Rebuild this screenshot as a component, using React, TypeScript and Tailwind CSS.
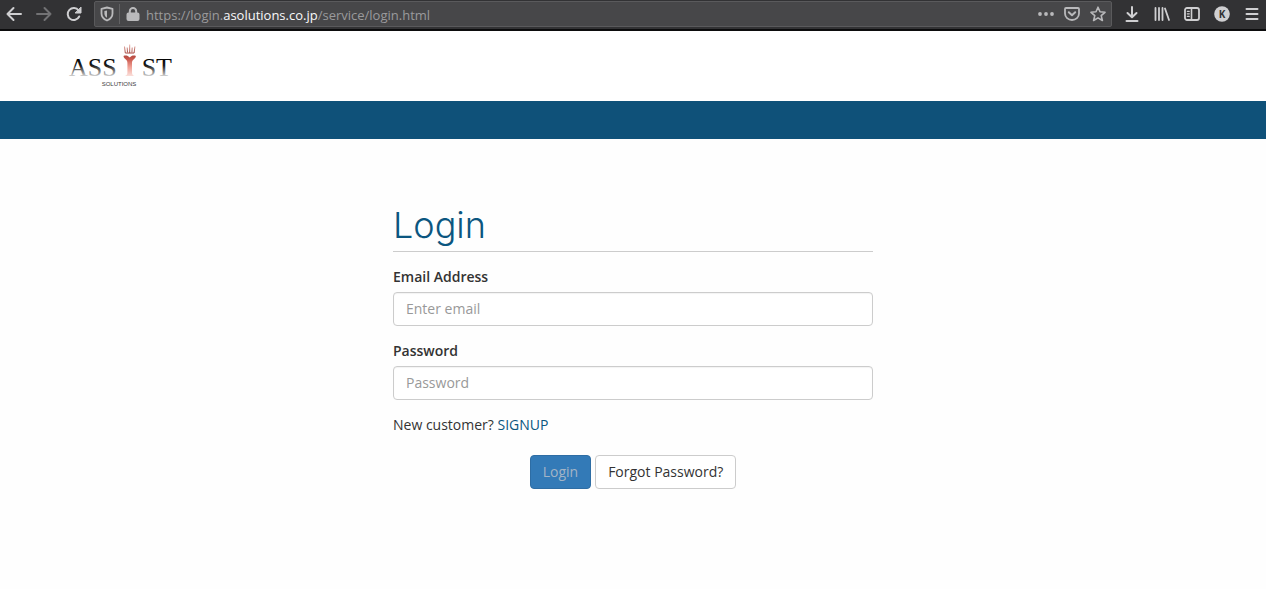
import React, { useState } from "react";

const Icon = ({ children }: { children: React.ReactNode }) => (
  <svg
    viewBox="0 0 16 16"
    className="w-4 h-4 shrink-0"
    fill="none"
    stroke="currentColor"
    strokeWidth="2"
    strokeLinecap="round"
    strokeLinejoin="round"
    aria-hidden="true"
  >
    {children}
  </svg>
);

const ToolBtn = ({
  label,
  disabled,
  children,
}: {
  label: string;
  disabled?: boolean;
  children: React.ReactNode;
}) => (
  <button
    type="button"
    aria-label={label}
    disabled={disabled}
    className="w-7 h-7 flex items-center justify-center text-[#cfcfd1] disabled:text-[#727274]"
  >
    <Icon>{children}</Icon>
  </button>
);

const BarBtn = ({
  label,
  children,
}: {
  label: string;
  children: React.ReactNode;
}) => (
  <button type="button" aria-label={label} className="text-[#b9b9bb]">
    <Icon>{children}</Icon>
  </button>
);

const BrowserBar = () => (
  <div className="flex items-center pb-px bg-[#323234] border-b-2 border-[#0c0c0d]">
    <div className="flex gap-0.5">
      <ToolBtn label="Back">
        <path d="M15 8H1.500M7.500 2L1.500 8l6 6" />
      </ToolBtn>
      <ToolBtn label="Forward" disabled>
        <path d="M1 8h13.500M8.500 2l6 6-6 6" />
      </ToolBtn>
      <ToolBtn label="Reload">
        <path d="M13.200 10.500A6 6 0 1 1 12.600 4.500" />
        <path d="M15 1.500V7H9.500z" fill="currentColor" strokeWidth="1" />
      </ToolBtn>
    </div>

    <div className="flex flex-1 min-w-0 items-center h-[26px] mx-1.5 pl-1 pr-[5px] bg-[#474749] border border-[#5a5a5c] rounded-xs">
      <BarBtn label="Tracking protection">
        <path
          d="M8 1.500l5.500 1.300v4.700c0 3.300-2.400 5.700-5.500 7-3.100-1.300-5.500-3.700-5.500-7V2.800z"
          strokeWidth="1.800"
        />
        <path
          d="M8 4.500v7.200c-1.700-1-2.600-2.400-2.600-4.300V5z"
          fill="currentColor"
          stroke="none"
        />
      </BarBtn>
      <span className="w-px h-5 ml-1 bg-[#626264]" />
      <span className="ml-[5px] text-[#b9b9bb]">
        <Icon>
          <rect x="2.500" y="7.500" width="11" height="6.500" rx="1" fill="currentColor" />
          <path d="M4.800 7V5.200a3.200 3.200 0 0 1 6.400 0V7" />
        </Icon>
      </span>
      <div className="flex-1 min-w-0 ml-[5px] pt-px truncate font-['Open_Sans',sans-serif] text-[13px] leading-5 text-[#9a9a9c]">
        https://login.<span className="text-[#f9f9fa]">asolutions.co.jp</span>
        /service/login.html
      </div>
      <div className="flex gap-2.5">
        <BarBtn label="Page actions">
          <g fill="currentColor" stroke="none">
            <circle cx="2" cy="8" r="1.900" />
            <circle cx="8" cy="8" r="1.900" />
            <circle cx="14" cy="8" r="1.900" />
          </g>
        </BarBtn>
        <BarBtn label="Save to Pocket">
          <path
            d="M2 2h12a1 1 0 0 1 1 1v4.500a7 6.500 0 0 1-14 0V3a1 1 0 0 1 1-1z"
            strokeWidth="1.800"
          />
          <path d="M4.800 6.300L8 9.300l3.200-3" />
        </BarBtn>
        <BarBtn label="Bookmark">
          <path
            d="M8 1.200l2 4.600 5 .5-3.800 3.300 1.200 4.900L8 11.900l-4.400 2.600 1.200-4.900L1 6.300l5-.5z"
            strokeWidth="1.600"
          />
        </BarBtn>
      </div>
    </div>

    <div className="flex gap-0.5">
      <ToolBtn label="Downloads">
        <path d="M8 1v10M3.500 7L8 11.300 12.500 7M2.500 15h11" />
      </ToolBtn>
      <ToolBtn label="Library">
        <path
          d="M1.500 2v12M5 2v12M8.500 2v12M11 2.500l4 11.500"
          strokeWidth="1.800"
        />
      </ToolBtn>
      <ToolBtn label="Sidebar">
        <rect x="1" y="2" width="14" height="12" rx="2" strokeWidth="1.800" />
        <path d="M7.500 2.500v11" strokeWidth="1.600" />
        <path d="M3.300 5.300h2M3.300 7.800h2M3.300 10.300h2" strokeWidth="1.200" />
      </ToolBtn>
      <ToolBtn label="Account">
        <circle cx="8" cy="8" r="7.800" fill="currentColor" stroke="none" />
        <text
          x="8"
          y="11.500"
          textAnchor="middle"
          fill="#323234"
          stroke="none"
          className="font-['Open_Sans',sans-serif] text-[10px] font-bold"
        >
          K
        </text>
      </ToolBtn>
      <ToolBtn label="Menu">
        <path d="M2.500 3h11M2.500 8h11M2.500 13h11" />
      </ToolBtn>
    </div>
  </div>
);

const Logo = () => (
  <svg
    viewBox="0 0 106 44"
    className="w-[106px] h-11"
    role="img"
    aria-label="Assist Solutions"
  >
    <defs>
      <linearGradient id="ink" gradientUnits="userSpaceOnUse" x1="0" y1="15" x2="0" y2="34">
        <stop offset="0" stopColor="#000" />
        <stop offset="0.4" stopColor="#1c1c1c" />
        <stop offset="1" stopColor="#e2e2e2" />
      </linearGradient>
      <linearGradient id="flame" gradientUnits="userSpaceOnUse" x1="0" y1="1" x2="0" y2="34">
        <stop offset="0" stopColor="#eeb9b2" />
        <stop offset="0.28" stopColor="#a4453d" />
        <stop offset="0.45" stopColor="#c9574c" />
        <stop offset="0.7" stopColor="#f0a095" />
        <stop offset="1" stopColor="#fbe6e2" />
      </linearGradient>
    </defs>
    <g fill="url(#ink)" className="font-['Liberation_Serif',serif] text-[26px]">
      <text x="2" y="33">ASS</text>
      <text x="105" y="33" textAnchor="end">ST</text>
    </g>
    <path
      d="M57.500 3.500l.8 6.500h8.800l.8-6.500M62.700 1.500V10M60.200 4.500l.3 5M65.200 4.500l-.3 5"
      fill="none"
      stroke="url(#flame)"
      strokeWidth="1"
    />
    <path
      d="M56.500 13c1.800-.9 4.600-.6 6.200 1.600 1.600-2.200 4.400-2.500 6.200-1.600-.2 1.800-1.200 2.500-2.300 3.400-1.200 1-1.600 2-1.600 3.600v9.500c0 2 .8 2.900 2.500 3.500h-9.600c1.700-.6 2.500-1.500 2.500-3.500V20c0-1.600-.4-2.600-1.600-3.600-1.100-.9-2.100-1.600-2.300-3.400z"
      fill="url(#flame)"
    />
    <text
      x="52"
      y="43"
      textAnchor="middle"
      fill="#3c3c3c"
      className="font-['Liberation_Sans',sans-serif] text-[6px]"
    >
      SOLUTIONS
    </text>
  </svg>
);

const Field = ({
  id,
  label,
  ...rest
}: { id: string; label: string } & React.InputHTMLAttributes<HTMLInputElement>) => (
  <div className="mb-[15px]">
    <label htmlFor={id} className="block mb-[5px] font-semibold">
      {label}
    </label>
    <input
      id={id}
      {...rest}
      className="block w-full h-[34px] px-3 pb-0.5 bg-white border border-[#ccc] rounded-sm inset-shadow-xs placeholder:text-[#999]"
    />
  </div>
);

export default function App() {
  const [email, setEmail] = useState("");
  const [password, setPassword] = useState("");

  return (
    <div className="min-h-screen bg-[#fefefe] font-['Open_Sans',sans-serif] text-sm leading-5 text-[#333]">
      <BrowserBar />

      <header className="bg-white h-[70px] pl-[67px] pt-3">
        <a href="#" className="inline-block">
          <Logo />
        </a>
      </header>
      <nav className="h-[38px] bg-[#0f5179]" />

      <main className="max-w-[480px] mx-auto pt-[66px] pb-10">
        <h1 className="mb-[15px] pb-1.5 border-b border-[#ccc] font-['Inter',sans-serif] font-light text-4xl leading-10 text-[#0b5680]">
          Login
        </h1>

        <form onSubmit={(e) => e.preventDefault()}>
          <Field
            id="email"
            label="Email Address"
            type="email"
            placeholder="Enter email"
            value={email}
            onChange={(e) => setEmail(e.target.value)}
          />
          <Field
            id="password"
            label="Password"
            type="password"
            placeholder="Password"
            value={password}
            onChange={(e) => setPassword(e.target.value)}
          />

          <p className="mb-5">
            New customer?{" "}
            <a href="#signup" className="text-[#0b5680]">
              SIGNUP
            </a>
          </p>

          <div className="flex justify-center gap-1">
            <button
              type="submit"
              className="h-[34px] px-3 bg-[#337ab7] border border-[#2e6da4] rounded-sm text-[#a3b4c6]"
            >
              Login
            </button>
            <a
              href="#forgot"
              className="h-[34px] px-3 py-1.5 bg-white border border-[#ccc] rounded-sm"
            >
              Forgot Password?
            </a>
          </div>
        </form>
      </main>
    </div>
  );
}
